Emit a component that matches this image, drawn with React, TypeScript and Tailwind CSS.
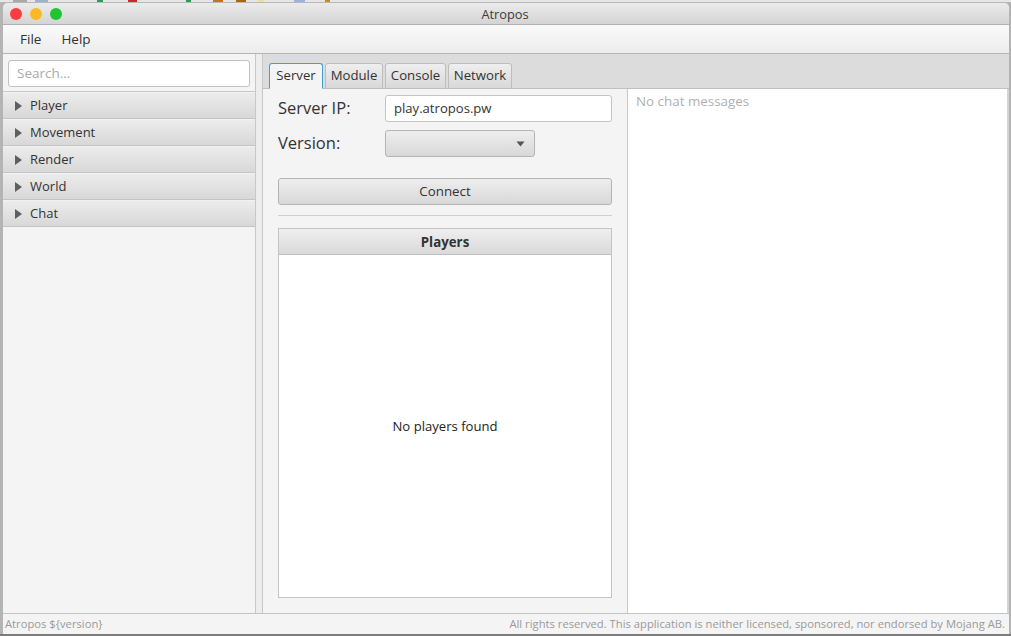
import React from "react";

const categories = ["Player", "Movement", "Render", "World", "Chat"];

const tabs = [
  { name: "Server", width: "w-[54px]", active: true },
  { name: "Module", width: "w-[58px]", active: false },
  { name: "Console", width: "w-[61px]", active: false },
  { name: "Network", width: "w-[64px]", active: false },
];

function Category({ name }: { name: string }) {
  return (
    <div className="h-[27px] flex items-center pl-[12px] border-b border-[#c4c4c4] border-t-[#f2f2f2] border-t bg-gradient-to-b from-[#ececec] to-[#d8d8d8] text-[13px] text-[#333]">
      <svg width="7" height="10" viewBox="0 0 7 10" className="mr-[8px]">
        <path d="M0 0 L7 5 L0 10 Z" fill="#5f5f5f" />
      </svg>
      {name}
    </div>
  );
}

export default function App() {
  return (
    <div
      className="relative w-[1011px] h-[636px] overflow-hidden bg-[#b4b4b4] pt-[3px] pl-[3px] pr-[2px] pb-[2px]"
      style={{ fontFamily: '"Open Sans", "Noto Sans", sans-serif' }}
    >
      {/* desktop peeking out above the window */}
      <div className="absolute left-0 top-0 w-full h-[3px] bg-[#e6e6e6] border-b border-[#b8b8b8]">
        <div className="absolute left-[13px] top-0 w-[14px] h-[2px] bg-[#a9a9a9]" />
        <div className="absolute left-[35px] top-0 w-[13px] h-[2px] bg-[#9fb2cc]" />
        <div className="absolute left-[97px] top-0 w-[6px] h-[2px] bg-[#2f9a55]" />
        <div className="absolute left-[128px] top-0 w-[9px] h-[2px] bg-[#d8232a]" />
        <div className="absolute left-[186px] top-0 w-[5px] h-[2px] bg-[#2f9a55]" />
        <div className="absolute left-[213px] top-0 w-[10px] h-[2px] bg-[#b9791f]" />
        <div className="absolute left-[236px] top-0 w-[10px] h-[2px] bg-[#a8660f]" />
        <div className="absolute left-[258px] top-0 w-[6px] h-[2px] bg-[#eedf9f]" />
        <div className="absolute left-[294px] top-0 w-[11px] h-[2px] bg-[#9fb2dc]" />
        <div className="absolute left-[325px] top-0 w-[5px] h-[2px] bg-[#c98a1c]" />
      </div>
      <div className="absolute left-0 bottom-0 w-full h-[2px] bg-[#7c7c7c]" />

      <div className="relative h-full flex flex-col bg-[#f4f4f4] rounded-t-[5px] overflow-hidden">
        {/* title bar */}
        <div className="relative h-[22px] shrink-0 flex items-center justify-center pt-[2px] pr-[2px] bg-gradient-to-b from-[#ebebeb] to-[#d4d4d4] border-b border-[#b1b1b1] text-[12.8px] text-[#3c3c3c]">
          <div className="absolute left-[7px] top-[5px] flex gap-[8px]">
            <div className="w-[12px] h-[12px] rounded-full bg-[#fc3d3f]" />
            <div className="w-[12px] h-[12px] rounded-full bg-[#fdb924]" />
            <div className="w-[12px] h-[12px] rounded-full bg-[#1fc531]" />
          </div>
          Atropos
        </div>

        {/* menu bar */}
        <div className="h-[29px] shrink-0 flex items-center gap-[20px] pl-[17px] bg-gradient-to-b from-[#fafafa] to-[#ececec] border-b border-[#b5b5b5] text-[13.5px] text-[#333]">
          <span>File</span>
          <span>Help</span>
        </div>

        {/* main */}
        <div className="flex-1 min-h-0 flex">
          {/* sidebar */}
          <div className="w-[252px] shrink-0 flex flex-col">
            <div className="h-[38px] border-b border-[#c8c8c8] pt-[6px] px-[5px]">
              <div className="h-[27px] w-[242px] flex items-center pl-[8px] bg-white border border-[#c2c2c2] rounded-[3px] text-[13.5px] text-[#aaa]">
                Search...
              </div>
            </div>
            {categories.map((c) => (
              <Category key={c} name={c} />
            ))}
          </div>

          {/* divider */}
          <div className="w-[8px] shrink-0 bg-[#ededed] border-x border-[#c8c8c8]" />

          {/* right side */}
          <div className="flex-1 min-w-0 flex flex-col">
            <div className="h-[35px] shrink-0 flex items-end gap-[2px] pl-[6px] bg-[#dcdcdc] border-b border-[#c0c0c0] text-[13.2px] text-[#333]">
              {tabs.map((t) => (
                <div
                  key={t.name}
                  className={`${t.width} h-[26px] -mb-px pb-[1px] flex items-center justify-center rounded-t-[3px] border ${
                    t.active
                      ? "bg-[#f4f4f4] border-[#3f9fd0] border-b-[#f4f4f4]"
                      : "bg-gradient-to-b from-[#efefef] to-[#d8d8d8] border-[#bdbdbd]"
                  }`}
                >
                  {t.name}
                </div>
              ))}
            </div>

            <div className="flex-1 min-h-0 flex">
              {/* server pane */}
              <div className="w-[365px] shrink-0 pl-[15px] pr-[15px] pt-[6px] pb-[15px] flex flex-col border-r border-[#c8c8c8]">
                <div className="h-[27px] flex items-center text-[16.5px] text-[#333]">
                  <span className="w-[107px]">Server IP:</span>
                  <div className="h-[27px] flex-1 flex items-center pl-[8px] bg-white border border-[#c4c4c4] rounded-[3px] text-[13.1px]">
                    play.atropos.pw
                  </div>
                </div>
                <div className="h-[27px] mt-[8px] flex items-center text-[16.5px] text-[#333]">
                  <span className="w-[107px]">Version:</span>
                  <div className="h-[27px] w-[150px] flex items-center justify-end pr-[9px] bg-gradient-to-b from-[#eeeeee] to-[#d8d8d8] border border-[#b4b4b4] rounded-[3px]">
                    <svg width="9" height="6" viewBox="0 0 9 6">
                      <path d="M0.5 0.5 H8.5 L4.5 5.5 Z" fill="#555" />
                    </svg>
                  </div>
                </div>
                <div className="h-[27px] mt-[21px] shrink-0 flex items-center justify-center bg-gradient-to-b from-[#eeeeee] to-[#d8d8d8] border border-[#b4b4b4] rounded-[3px] text-[13.3px] text-[#333]">
                  Connect
                </div>
                <div className="h-px mt-[10px] shrink-0 bg-[#cfcfcf]" />
                <div className="flex-1 min-h-0 mt-[12px] flex flex-col bg-white border border-[#c4c4c4]">
                  <div className="h-[26px] shrink-0 flex items-center justify-center pt-[2px] bg-gradient-to-b from-[#efefef] to-[#d9d9d9] border-b border-[#c0c0c0] text-[13.3px] font-bold text-[#333]">
                    Players
                  </div>
                  <div className="flex-1 flex items-center justify-center pt-[2px] text-[13.1px] text-[#222]">
                    No players found
                  </div>
                </div>
              </div>

              {/* chat */}
              <div className="flex-1 min-w-0 bg-white pl-[8px] pt-[2px] border-r-2 border-[#d4d4d4] text-[13.4px] text-[#b0b0b0]">
                No chat messages
              </div>
            </div>
          </div>
        </div>

        {/* status bar */}
        <div className="h-[21px] shrink-0 flex items-center justify-between pl-[2px] pr-[4px] border-t border-[#c4c4c4] bg-[#f4f4f4] text-[11.2px] tracking-[0.02px] text-[#9a9a9a]">
          <span>Atropos ${"{version}"}</span>
          <span>All rights reserved. This application is neither licensed, sponsored, nor endorsed by Mojang AB.</span>
        </div>
      </div>
    </div>
  );
}
